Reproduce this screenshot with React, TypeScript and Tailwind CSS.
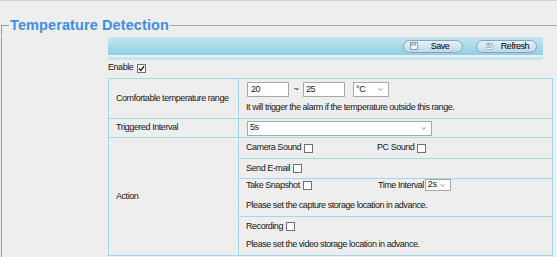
import React from 'react';

const Check = ({ checked = false, className = '' }: { checked?: boolean; className?: string }) => (
    <span className={`inline-flex h-[9px] w-[9px] shrink-0 items-center justify-center border border-[#707070] bg-white ${className}`}>
        {checked && (
            <svg viewBox="0 0 9 9" className="h-[7px] w-[7px]">
                <path d="M1.2 4.6 L3.6 7 L7.8 1.6" stroke="#1c1c1c" strokeWidth="1.7" fill="none" />
            </svg>
        )}
    </span>
);

const Chevron = () => (
    <svg viewBox="0 0 6 4" className="h-[3px] w-[5px] shrink-0">
        <path d="M0.5 0.5 L3 3.2 L5.5 0.5" stroke="#4f6b86" strokeWidth="1" fill="none" />
    </svg>
);

const Select = ({ value, className = '' }: { value: string; className?: string }) => (
    <span className={`flex items-center justify-between border border-[#a9a9a9] bg-white pl-[2px] pr-[5px] ${className}`}>
        <span>{value}</span>
        <Chevron />
    </span>
);

const FloppyIcon = () => (
    <svg viewBox="0 0 9 9" className="h-[8px] w-[8px]">
        <rect x="0.5" y="0.5" width="8" height="8" fill="#f2f6f9" stroke="#7f95a8" strokeWidth="1" />
        <rect x="2" y="0.5" width="4" height="3" fill="#c9d6e0" stroke="#7f95a8" strokeWidth="0.8" />
    </svg>
);

const RefreshIcon = () => (
    <svg viewBox="0 0 10 9" className="h-[8px] w-[9px]">
        <path d="M2 2.3 H5.6 A2.6 2.6 0 0 1 5.6 7.5 H1.6" stroke="#6f8aa2" strokeWidth="2.6" fill="none" />
        <path d="M2 2.3 H5.6 A2.6 2.6 0 0 1 5.6 7.5 H1.6" stroke="#ffffff" strokeWidth="1.3" fill="none" />
        <path d="M3.6 0.4 L1 2.3 L3.6 4.2 Z" fill="#ffffff" stroke="#6f8aa2" strokeWidth="0.7" />
    </svg>
);

const PillButton = ({ icon, label, className = '' }: { icon: React.ReactNode; label: string; className?: string }) => (
    <button className={`flex h-[13px] items-center rounded-full border border-[#86a3bb] bg-linear-to-b from-[#e6f2f8] to-[#bcd9e9] ${className}`}>
        {icon}
        <span className="flex-1 text-center leading-none text-black">{label}</span>
    </button>
);

export default function App() {
    return (
        <div className="h-[257px] w-[557px] overflow-hidden bg-[#eeeeee] font-['Liberation_Sans',Arial,sans-serif] text-[9px] tracking-[-0.45px] text-[#161616]">
            {/* top rule */}
            <div className="h-px bg-[#cfcfcf]" />

            {/* Legend */}
            <div className="mt-[13px] flex h-[22px]">
                <div className="ml-[1px] mt-[11px] w-[8px] border-l border-t border-[#9c9c9c]" />
                <h1 className="px-[1px] text-[14.5px] font-bold leading-[22px] tracking-[0.1px] text-[#3d8fe3]">
                    Temperature Detection
                </h1>
                <div className="mt-[11px] flex-1 border-t border-[#a8a8a8]" />
            </div>

            <div className="ml-[1px] h-[300px] border-l border-[#9c9c9c] pl-[106px]">
                {/* Toolbar */}
                <div className="mt-[1px] flex h-[18px] w-[435px] items-center justify-end gap-[13px] bg-linear-to-b from-[#c6e6f0] to-[#8dcfe6] pr-[6px]">
                    <PillButton
                        className="w-[60px] pl-[6px]"
                        icon={<FloppyIcon />}
                        label="Save"
                    />
                    <PillButton
                        className="w-[61px] pl-[8px]"
                        icon={<RefreshIcon />}
                        label="Refresh"
                    />
                </div>
                <div className="mt-[2px] h-[3px] w-[435px] bg-[#c4e7f3]" />

                {/* Enable */}
                <div className="flex h-[16px] items-center">
                    <span>Enable</span>
                    <Check checked className="ml-[4px]" />
                </div>

                {/* Settings table */}
                <div className="mt-[2px] grid w-[445px] grid-cols-[130px_314px] grid-rows-[40px_19px_21px_20px_38px_39px] border-l border-t border-[#a3d6ea]">
                    <div className="flex items-center border-b border-r border-[#a3d6ea] pl-[7px]">
                        Comfortable temperature range
                    </div>
                    <div className="border-b border-r border-[#a3d6ea] pl-[7px] pt-[3px]">
                        <div className="flex h-[15px] items-stretch">
                            <span className="ml-[1px] flex w-[42px] items-center border border-[#a9a9a9] bg-white pl-[3px]">20</span>
                            <span className="flex w-[14px] items-center justify-center">~</span>
                            <span className="flex w-[42px] items-center border border-[#a9a9a9] bg-white pl-[2px]">25</span>
                            <Select value="°C" className="ml-[8px] w-[36px]" />
                        </div>
                        <div className="mt-[5px] leading-[11px]">
                            It will trigger the alarm if the temperature outside this range.
                        </div>
                    </div>

                    <div className="flex items-center border-b border-r border-[#a3d6ea] pl-[7px]">
                        Triggered Interval
                    </div>
                    <div className="flex items-center border-b border-r border-[#a3d6ea] pl-[8px]">
                        <Select value="5s" className="h-[15px] w-[185px]" />
                    </div>

                    <div className="row-span-4 flex items-center border-b border-r border-[#a3d6ea] pl-[7px]">
                        Action
                    </div>
                    <div className="flex items-center border-b border-r border-[#a3d6ea] pl-[7px]">
                        <span className="flex w-[131px] items-center">
                            Camera Sound <Check className="ml-[3px]" />
                        </span>
                        <span className="flex items-center">
                            PC Sound <Check className="ml-[3px]" />
                        </span>
                    </div>
                    <div className="flex items-center border-b border-r border-[#a3d6ea] pl-[7px]">
                        Send E-mail <Check className="ml-[3px]" />
                    </div>
                    <div className="border-b border-r border-[#a3d6ea] pl-[7px]">
                        <div className="flex h-[13px] items-center">
                            <span className="flex w-[132px] items-center">
                                Take Snapshot <Check className="ml-[3px]" />
                            </span>
                            <span>Time Interval</span>
                            <Select value="2s" className="ml-[1px] h-[12px] w-[26px] self-start" />
                        </div>
                        <div className="mt-[8px] leading-[11px]">
                            Please set the capture storage location in advance.
                        </div>
                    </div>
                    <div className="border-b border-r border-[#a3d6ea] pl-[7px] pt-[3px]">
                        <div className="flex h-[13px] items-center">
                            Recording <Check className="ml-[3px]" />
                        </div>
                        <div className="mt-[6px] leading-[11px]">
                            Please set the video storage location in advance.
                        </div>
                    </div>
                </div>
            </div>
        </div>
    );
}
